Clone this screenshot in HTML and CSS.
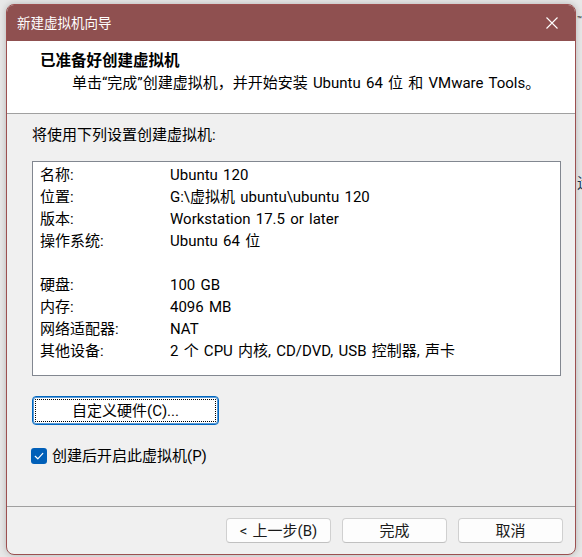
FILE: index.html
```html
<!DOCTYPE html>
<html lang="zh-CN">
<head>
<meta charset="utf-8">
<title>新建虚拟机向导</title>
<link rel="stylesheet" href="styles.css">
</head>
<body>
<div class="desk-frag tm">™</div>
<div class="desk-frag yun">运</div>
<div class="window">
  <div class="titlebar">
    <span class="title">新建虚拟机向导</span>
    <span class="close">
      <svg width="12" height="12" viewBox="0 0 12 12"><path d="M0.5 0.5 L11.5 11.5 M11.5 0.5 L0.5 11.5" stroke="#ffffff" stroke-width="1.1" fill="none"/></svg>
    </span>
  </div>
  <div class="header">
    <div class="heading">已准备好创建虚拟机</div>
    <div class="subtitle">单击“完成”创建虚拟机，并开始安装 Ubuntu 64 位 和 VMware Tools。</div>
  </div>
  <div class="content">
    <div class="intro">将使用下列设置创建虚拟机:</div>
    <div class="listbox">
      <div class="row"><span class="label">名称:</span><span class="value">Ubuntu 120</span></div>
      <div class="row"><span class="label">位置:</span><span class="value">G:\虚拟机 ubuntu\ubuntu 120</span></div>
      <div class="row"><span class="label">版本:</span><span class="value">Workstation 17.5 or later</span></div>
      <div class="row"><span class="label">操作系统:</span><span class="value">Ubuntu 64 位</span></div>
      <div class="row blank"></div>
      <div class="row"><span class="label">硬盘:</span><span class="value">100 GB</span></div>
      <div class="row"><span class="label">内存:</span><span class="value">4096 MB</span></div>
      <div class="row"><span class="label">网络适配器:</span><span class="value">NAT</span></div>
      <div class="row"><span class="label">其他设备:</span><span class="value">2 个 CPU 内核, CD/DVD, USB 控制器, 声卡</span></div>
    </div>
    <div class="hw-row"><button class="btn hw">自定义硬件(C)...</button></div>
    <div class="check">
      <span class="box"><svg width="16" height="16" viewBox="0 0 16 16"><path d="M4.2 8.3 L6.8 10.8 L11.8 5.4" stroke="#ffffff" stroke-width="1.2" fill="none" stroke-linecap="round" stroke-linejoin="round"/></svg></span>
      <span class="check-text">创建后开启此虚拟机(P)</span>
    </div>
  </div>
  <div class="footer">
    <button class="btn">&lt; 上一步(B)</button>
    <button class="btn">完成</button>
    <button class="btn">取消</button>
  </div>
</div>
</body>
</html>
```
FILE: styles.css
```css
* { box-sizing: border-box; }
html, body {
  margin: 0;
  padding: 0;
  width: 582px;
  height: 557px;
  overflow: hidden;
}
body {
  background: #e8e8e8;
  font-family: Roboto, "Noto Sans CJK SC", sans-serif;
  font-size: 15px;
  word-spacing: 1.5px;
  color: #000;
  padding: 4px 0 0 6px;
  position: relative;
}
.desk-frag {
  position: absolute;
  left: 577px;
  color: #222;
}
.tm { top: 15px; font-size: 8px; }
.yun { top: 171px; font-size: 15px; color: #1d3550; }

.window {
  position: relative;
  width: 570px;
  height: 551px;
  border: 1px solid #9c5050;
  border-radius: 8px;
  overflow: hidden;
  display: flex;
  flex-direction: column;
  background: #f0f0f0;
  box-shadow: 0 0 7px rgba(0,0,0,0.22);
}
.titlebar {
  height: 36px;
  background: #8f5050;
  display: flex;
  align-items: center;
  justify-content: space-between;
  padding-left: 10px;
  flex: none;
}
.title {
  color: #ffffff;
  font-size: 13.5px;
  line-height: 20px;
}
.close {
  width: 46px;
  height: 36px;
  display: flex;
  align-items: center;
  justify-content: center;
}
.close svg { display: block; }

.header {
  height: 73px;
  flex: none;
  background: #ffffff;
  border-bottom: 1px solid #a0a0a0;
  padding: 10px 0 0 33px;
}
.heading {
  font-weight: bold;
  font-size: 15.5px;
  line-height: 20px;
}
.subtitle {
  margin-top: 2px;
  padding-left: 32px;
  line-height: 20px;
}

.content {
  flex: 1;
  padding: 11px 14px 0 25px;
}
.intro {
  line-height: 20px;
}
.listbox {
  margin-top: 16px;
  height: 215px;
  background: #ffffff;
  border: 1px solid #828790;
  padding: 2px 7px;
}
.row {
  display: flex;
  height: 22px;
  line-height: 22px;
  white-space: nowrap;
}
.label { width: 130px; flex: none; }

.hw-row { margin-top: 20px; }
.btn {
  font-family: Roboto, "Noto Sans CJK SC", sans-serif;
  font-size: 15px;
  word-spacing: 1.5px;
  color: #1a1a1a;
  background: #fdfdfd;
  border: 1px solid #d0d0d0;
  border-bottom-color: #c0c0c0;
  border-radius: 4px;
  width: 105px;
  height: 25px;
  padding: 0;
  line-height: 20px;
}
.btn.hw {
  width: 187px;
  height: 29px;
  background: #ffffff;
  border: 1px solid #0067c0;
  box-shadow: inset 0 0 0 1px #5a9ad6;
  outline: 1px dotted #000;
  outline-offset: -4px;
  color: #000;
}
.check {
  margin-top: 23px;
  margin-left: -1px;
  display: flex;
  align-items: center;
  height: 16px;
}
.box {
  width: 16px;
  height: 16px;
  border-radius: 3px;
  background: #005fb8;
  display: block;
  flex: none;
}
.box svg { display: block; }
.check-text {
  margin-left: 5px;
  line-height: 20px;
}

.footer {
  flex: none;
  height: 48px;
  border-top: 1px solid #a0a0a0;
  display: flex;
  justify-content: flex-end;
  align-items: flex-start;
  gap: 11px;
  padding: 11px 12px 0 0;
}
```
